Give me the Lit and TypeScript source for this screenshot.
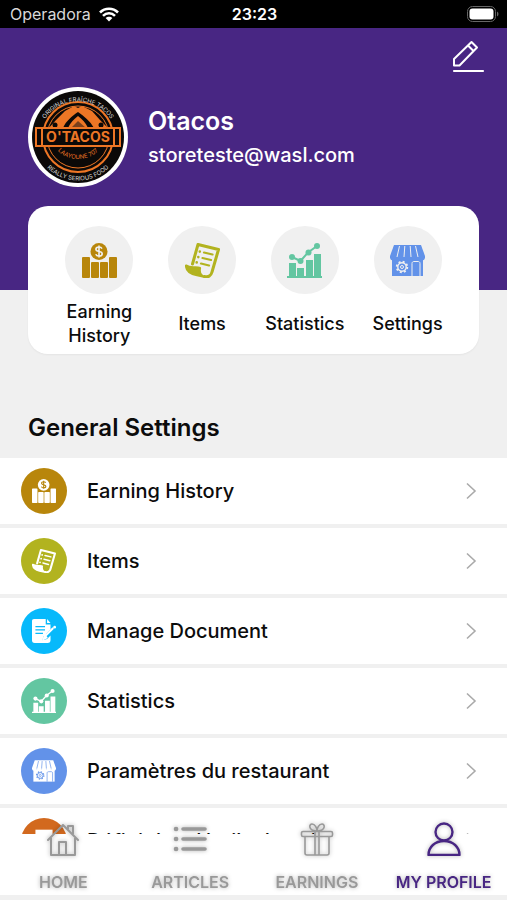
import { LitElement, html, css, svg } from "lit";
import { customElement } from "lit/decorators.js";

const money = svg`
  <circle cx="17" cy="8.5" r="8.5" fill="currentColor"/>
  <path d="M20 5.6C19.4 4.5 18.3 4 17 4C15.200 4 13.900 4.900 13.900 6.300C13.900 9.500 20.200 7.600 20.200 10.700C20.200 12.200 18.800 13.100 17 13.100C15.400 13.100 14.200 12.400 13.800 11.200M17 2.600V14.400" fill="none" stroke="var(--hole)" stroke-width="1.600"/>
  <path d="M1 14H7a1 1 0 0 1 1 1V34a1 1 0 0 1-1 1H1a1 1 0 0 1-1-1V15a1 1 0 0 1 1-1ZM28 14h6a1 1 0 0 1 1 1V34a1 1 0 0 1-1 1H28a1 1 0 0 1-1-1V15a1 1 0 0 1 1-1ZM10 19h6a1 1 0 0 1 1 1V34a1 1 0 0 1-1 1H10a1 1 0 0 1-1-1V20a1 1 0 0 1 1-1ZM19 19h6a1 1 0 0 1 1 1V34a1 1 0 0 1-1 1H19a1 1 0 0 1-1-1V20a1 1 0 0 1 1-1Z" fill="currentColor"/>`;

const receipt = svg`
  <g fill="none" stroke="currentColor" stroke-width="2.200" stroke-linejoin="round" stroke-linecap="round">
    <path d="M7.500 21L13 1.500L33.500 6.500L27 29C26 33 23 34.500 19.500 33.500" stroke-width="3"/>
    <path d="M1 22.500C6 26 11 23 15 25C14 30 16 33 20 34L11 32C5 30.500 1 27 1 22.500Z" fill="currentColor"/>
    <path d="M19 9.500L27.500 11.500M17.500 15L26 17M16 20.500L24 22.500"/>
    <path d="M14.800 8.500v.1M13.300 14v.1M11.700 19.400v.1" stroke-width="2.600"/>
  </g>`;

const documentPen = svg`
  <path d="M3 0H20V8H27V15L17 25L15 31L22 29L27 24V31C27 34 25 35 23 35H4C1 35 0 33 0 31V3C0 1 1 0 3 0ZM22 0L27 6H22Z" fill="currentColor"/>
  <path d="M5 11H19M5 16H19M5 21H16" stroke="var(--hole)" stroke-width="1.800"/>
  <path d="M20 24L31 13M17 29L19 24L21 27Z" fill="none" stroke="currentColor" stroke-width="3"/>
  <circle cx="33" cy="12" r="2" fill="currentColor"/>`;

const chart = svg`
  <path d="M0 33H35V35H0ZM2 20H9V34H2ZM10 25H17V34H10ZM19 17H26V34H19ZM27 11H34V34H27Z" fill="currentColor"/>
  <path d="M5 14L13.500 18L21 9.500L30 3" fill="none" stroke="currentColor" stroke-width="2"/>
  <g fill="currentColor"><circle cx="5" cy="14" r="3"/><circle cx="13.500" cy="18" r="3"/><circle cx="21.500" cy="9.500" r="3"/><circle cx="30" cy="3" r="3"/></g>`;

const shop = svg`
  <path d="M2 15H33V33H2Z" fill="currentColor"/>
  <path d="M4 2H31L35 13V15H0V13Z" fill="currentColor"/>
  <path d="M0 14a3.500 3.500 0 0 0 7 0a3.500 3.500 0 0 0 7 0a3.500 3.500 0 0 0 7 0a3.500 3.500 0 0 0 7 0a3.500 3.500 0 0 0 7 0Z" fill="currentColor"/>
  <g fill="none" stroke="var(--hole)" stroke-width="1">
    <path d="M9.500 3L7 14M14.800 3L14 14M20.200 3L21 14M25.500 3L28 14"/>
    <path d="M22 33V20.500C22 19 23 18.500 24 18.500H28C29 18.500 30 19 30 20.500V33"/>
    <circle cx="12" cy="24" r="4.200" stroke-width="1.400"/>
    <circle cx="12" cy="24" r="5.300" stroke-width="1.800" stroke-dasharray="2 2.160"/>
    <circle cx="12" cy="24" r="1.500"/>
  </g>`;

const card = svg`<path d="M5 1H30V34H5Z" fill="currentColor"/><path d="M9 12H26M9 20H20" stroke="var(--hole)" stroke-width="2"/>`;

const tiles = [
  { label: "Earning History", icon: money, tone: "gold" },
  { label: "Items", icon: receipt, tone: "olive" },
  { label: "Statistics", icon: chart, tone: "green" },
  { label: "Settings", icon: shop, tone: "blue" },
];

const rows = [
  { label: "Earning History", icon: money, tone: "gold" },
  { label: "Items", icon: receipt, tone: "olive" },
  { label: "Manage Document", icon: documentPen, tone: "sky" },
  { label: "Statistics", icon: chart, tone: "green" },
  { label: "Paramètres du restaurant", icon: shop, tone: "blue" },
  { label: "Définir les détails de paiement", icon: card, tone: "orange" },
];

const tabs = [
  { label: "HOME", icon: svg`<path d="M2 18L17 3L32 18M5 16V33H29V16M13 33V20H20V33M22 7V4H27V12" stroke-width="2"/>` },
  { label: "ARTICLES", icon: svg`<path d="M10 7H32M10 17H32M10 27H32" stroke-width="3.600"/><path d="M3 7h.1M3 17h.1M3 27h.1" stroke-width="4.600"/>` },
  { label: "EARNINGS", icon: svg`<path d="M3 9.500H31a1.500 1.500 0 0 1 1.500 1.500V13a1.500 1.500 0 0 1-1.500 1.500H3a1.500 1.500 0 0 1-1.500-1.500V11A1.500 1.500 0 0 1 3 9.500ZM5 15V31a2 2 0 0 0 2 2H27a2 2 0 0 0 2-2V15M15 10V33M19 10V33M16 9C8 8 9 2 12 2C15 2 17 6 17 9C17 6 19 2 22 2C25 2 26 8 18 9" stroke-width="1.600"/>` },
  { label: "MY PROFILE", icon: svg`<circle cx="17" cy="10" r="8.500"/><path d="M1.500 33C1.500 25 8 19 17 19S32.500 25 32.500 33Z"/>`, current: true },
];

@customElement("app-root")
export class AppRoot extends LitElement {
  static styles = css`
    :host { display: flex; flex-direction: column; height: 100vh; overflow: hidden; background: #f0f0f0; color: #0c0c0c; font-family: Inter, "Noto Sans", sans-serif; }
    * { box-sizing: border-box; }
    svg { display: block; flex: none; }
    button { border: 0; padding: 0; background: none; color: inherit; font: inherit; cursor: pointer; }
    .status { flex: none; display: grid; grid-template-columns: 1fr auto 1fr; align-items: center; height: 28px; padding: 0 8px 0 10px; background: #000; color: #fff; font-size: 16px; line-height: 28px; }
    .carrier { display: flex; align-items: center; gap: 8px; color: #d8d8d8; }
    .time { font-weight: 600; }
    .battery { justify-self: end; }
    main { flex: 1; min-height: 0; overflow: hidden; }
    .hero { height: 262px; padding: 12px 20px 0 28px; background: #482683; color: #fff; }
    .edit { display: block; margin-left: auto; }
    .person { display: flex; align-items: center; gap: 20px; margin-top: 14px; }
    .name { margin: 0 0 8px; font-size: 25px; line-height: 28px; font-weight: 600; }
    .mail { margin: 0; font-size: 20px; line-height: 24px; font-weight: 500; }
    .card { display: grid; grid-template-columns: repeat(4, 1fr); margin: -84px 28px 0; height: 148px; padding: 20px 20px 0; border-radius: 20px; background: #fff; box-shadow: 0 1px 2px #0000000d; }
    .tile { display: flex; flex-direction: column; align-items: center; font-size: 18px; line-height: 24px; font-weight: 500; }
    .tile-label { display: flex; align-items: center; height: 48px; margin-top: 6px; }
    .disc { flex: none; display: grid; place-items: center; width: 68px; height: 68px; border-radius: 50%; background: var(--hole); --hole: #f0f0f0; color: var(--tone); }
    h2 { margin: 56px 28px 12px; font-size: 24px; line-height: 36px; font-weight: 600; }
    .rows { display: grid; gap: 4px; margin: 0; padding: 0; list-style: none; }
    .row { display: flex; align-items: center; gap: 20px; width: 100%; height: 66px; padding: 0 30px 0 21px; background: #fff; text-align: left; font-size: 20px; line-height: 28px; font-weight: 500; }
    .row-label { flex: 1; }
    .dot { flex: none; display: grid; place-items: center; width: 46px; height: 46px; border-radius: 50%; background: var(--tone); --hole: var(--tone); color: #fff; }
    .gold { --tone: #b8860b; }
    .olive { --tone: #b2b31f; }
    .sky { --tone: #07b9fb; }
    .green { --tone: #63c6a1; }
    .blue { --tone: #6292e9; }
    .orange { --tone: #d2691e; }
    nav { flex: none; display: grid; grid-template-columns: repeat(4, 1fr); height: 66px; border-bottom: 5px solid #f0f0f0; background: #fff; }
    .tab { display: flex; flex-direction: column; align-items: center; gap: 16px; margin-top: -12px; color: #999; font-size: 16px; line-height: 20px; font-weight: 600; text-decoration: none; white-space: nowrap; filter: drop-shadow(0 0 2px #0000004d); }
    .current { color: #482683; }
  `;

  render() {
    return html`
      <header class="status">
        <span class="carrier">Operadora
          <svg width="20" height="15" viewBox="0 0 20 15" fill="none" stroke="#fff" stroke-width="2.600"><path d="M1 5.500C6 .5 14 .5 19 5.500M4 8.800C7.500 5.300 12.500 5.300 16 8.800"/><path d="M6.600 11C8.500 9.200 11.500 9.200 13.400 11L10 14.600Z" fill="#fff" stroke="none"/></svg>
        </span>
        <time class="time">23:23</time>
        <svg class="battery" width="32" height="16" viewBox="0 0 32 16"><rect x=".5" y=".5" width="28" height="15" rx="5" fill="none" stroke="#666"/><rect x="2.500" y="2.500" width="24" height="11" rx="3" fill="#fff"/><path d="M30 5.500C32 6.500 32 9.500 30 10.500Z" fill="#666"/></svg>
      </header>
      <main>
        <section class="hero">
          <button class="edit" aria-label="Edit profile">
            <svg width="36" height="33" viewBox="0 0 36 33" fill="none" stroke="#fff" stroke-width="2" stroke-linejoin="round"><path d="M3 25.500V19L20.500 2L26 7.500L8.500 25.500ZM17 5.500L22.500 11"/><path d="M3 31H32" stroke-width="2.200" stroke-linecap="round"/></svg>
          </button>
          <div class="person">
            <svg width="100" height="100" viewBox="0 0 100 100" role="img" aria-label="O'Tacos logo">
              <defs><path id="top" d="M10.500 54A39.500 39.500 0 0 1 89.500 54"/><path id="bottom" d="M6.500 50A43.500 43.500 0 0 0 93.500 50"/><path id="inner" d="M24 50A26 22 0 0 0 76 50"/></defs>
              <circle cx="50" cy="50" r="50" fill="#fff"/><circle cx="50" cy="50" r="46" fill="#0b0908"/>
              <g fill="none" stroke="#ed7625"><circle cx="50" cy="50" r="35" stroke-width="2"/><circle cx="50" cy="50" r="31" stroke-width="1"/></g>
              <path d="M20 42L28 33L37 24L46 19L50 21L54 19L64 24L72 33L81 42Z" fill="#ed7625"/>
              <path d="M35 41C38 34 44 29 50 25C56 29 62 34 66 41H60C58 36 54 32 50 29C46 32 42 36 40 41Z" fill="#0b0908"/>
              <path d="M43 41L50 34L58 41Z" fill="#7a401c"/>
              <circle cx="27" cy="38" r="2.500" fill="#0b0908"/><circle cx="73" cy="38" r="2.500" fill="#0b0908"/>
              <rect x="8" y="41" width="84" height="18" fill="#0b0908" stroke="#ed7625" stroke-width="2"/><path d="M14 41V59M86 41V59" stroke="#ed7625" stroke-width="2"/>
              <text x="50" y="55" text-anchor="middle" font-size="14" font-weight="700" fill="#ed7625">O'TACOS</text>
              <g font-size="6" fill="#ddd" text-anchor="middle"><text><textPath href="#top" startOffset="50%">ORIGINAL FRAÎCHE TACOS</textPath></text><text><textPath href="#bottom" startOffset="50%">REALLY SERIOUS FOOD</textPath></text><text fill="#ed7625"><textPath href="#inner" startOffset="50%">LAAYOUNE 707</textPath></text></g>
            </svg>
            <div><h1 class="name">Otacos</h1><p class="mail">storeteste@wasl.com</p></div>
          </div>
        </section>
        <section class="card">
          ${tiles.map((t) => html`<button class="tile"><span class="disc ${t.tone}"><svg width="35" height="35" viewBox="0 0 35 35">${t.icon}</svg></span><span class="tile-label">${t.label}</span></button>`)}
        </section>
        <h2>General Settings</h2>
        <ul class="rows">
          ${rows.map((r) => html`<li><button class="row"><span class="dot ${r.tone}"><svg width="24" height="24" viewBox="0 0 35 35">${r.icon}</svg></span><span class="row-label">${r.label}</span><svg width="12" height="18" viewBox="0 0 12 18" fill="none" stroke="#aaa" stroke-width="1.600"><path d="M2 1.500L10 9L2 16.500"/></svg></button></li>`)}
        </ul>
      </main>
      <nav aria-label="Main">
        ${tabs.map((t) => html`<a href="#" class="tab ${t.current ? "current" : ""}"><svg width="34" height="34" viewBox="0 0 34 34" fill="none" stroke="currentColor" stroke-width="2.400" stroke-linecap="round" stroke-linejoin="round">${t.icon}</svg>${t.label}</a>`)}
      </nav>`;
  }
}
